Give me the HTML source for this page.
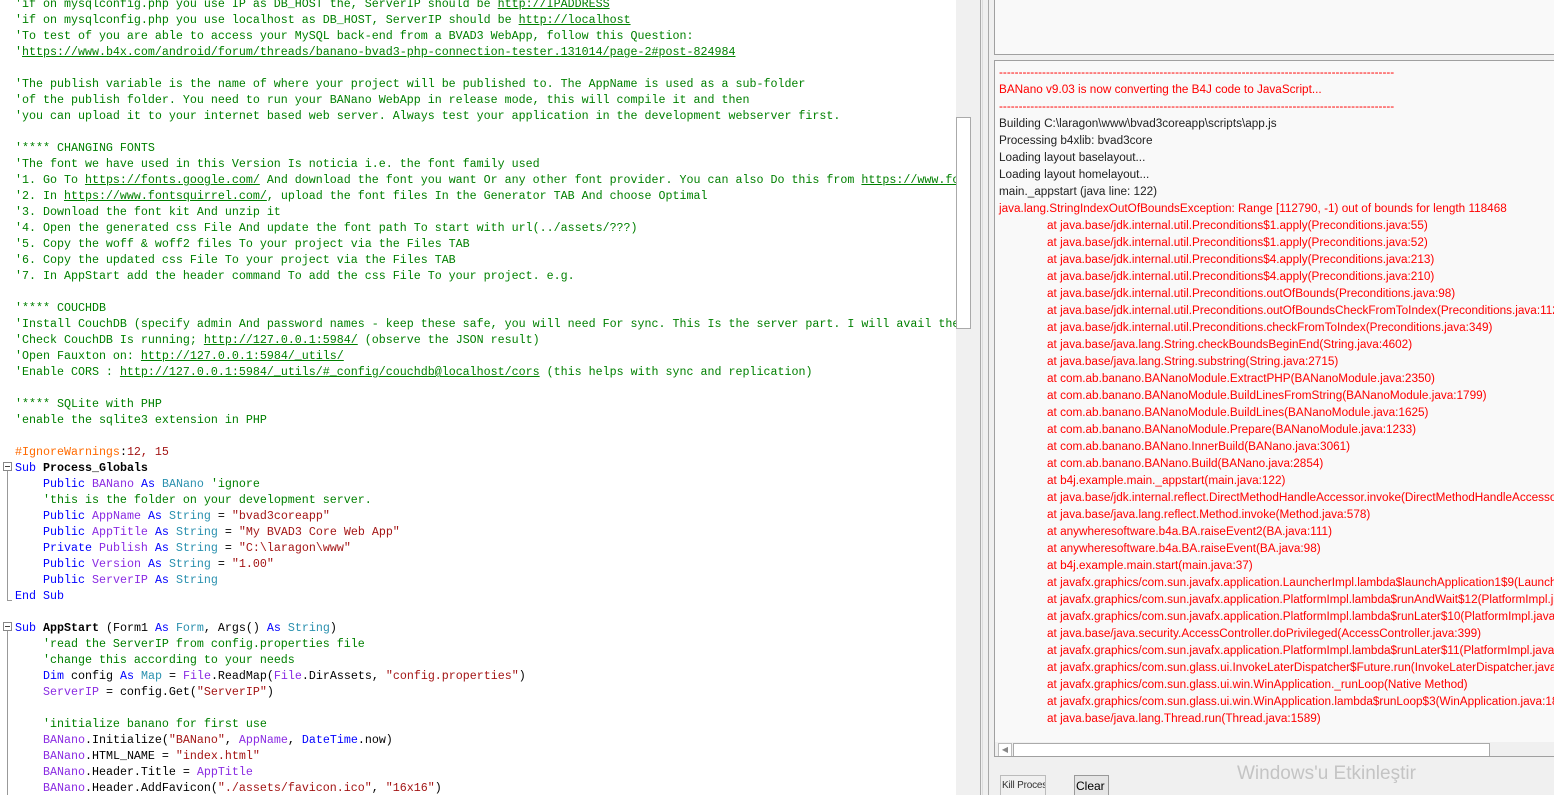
<!DOCTYPE html>
<html><head><meta charset="utf-8"><style>
*{margin:0;padding:0;box-sizing:border-box}
html,body{width:1554px;height:795px;overflow:hidden}
body{background:#f0f0f0;position:relative;font-family:"Liberation Sans",sans-serif}
#ed{position:absolute;left:0;top:0;width:956px;height:795px;background:#fff;overflow:hidden}
#code{position:absolute;left:15px;top:-4px;font-family:"Liberation Mono",monospace;font-size:11.67px;line-height:16px;white-space:pre;color:#000}
.c{color:#008000}.c u{text-decoration:underline}
.k{color:#0000ff}.t{color:#2b91af}.v{color:#8a2be2}.s{color:#a31515}.d{color:#ff6a00}.b{font-weight:bold}
.fold{position:absolute;left:3px;width:9px;height:9px;border:1px solid #888;background:#fff}
.fold:after{content:"";position:absolute;left:1px;top:3px;width:5px;height:1px;background:#444}
.fl{position:absolute;left:7px;width:1px;background:#999}
#vs{position:absolute;left:956px;top:0;width:16px;height:795px;background:#f0f0f0}
#th{position:absolute;left:956px;top:117px;width:15px;height:212px;background:#fff;border:1px solid #aaa}
.vl{position:absolute;top:0;height:795px;width:1px;background:#aaa}
#top{position:absolute;left:994px;top:-2px;width:570px;height:57px;background:#f9f9f9;border:1px solid #a0a0a0}
#log{position:absolute;left:994px;top:60px;width:570px;height:697px;background:#f9f9f9;border:1px solid #a0a0a0;overflow:hidden}
#lt{position:absolute;left:4px;top:3px;font-size:11.75px;line-height:17px;white-space:pre;color:#ff0000}
#lt .n{color:#222}
#lt .i{padding-left:48px}
#hs{position:absolute;left:0;top:681px;width:570px;height:15px;background:#f0f0f0}
#hl{position:absolute;left:3px;top:1px;width:14px;height:14px;border:1px solid #bbb;background:#fff;font-size:8px;color:#888;text-align:center;line-height:12px}
#ht{position:absolute;left:18px;top:1px;width:477px;height:14px;border:1px solid #aaa;background:#fff}
.btn{position:absolute;top:775px;height:22px;border:1px solid #bbb;background:#f0f0f0;font-size:12px;line-height:20px;padding:0 1px;color:#333;white-space:nowrap;overflow:hidden}
#wm{position:absolute;left:1237px;top:763px;font-size:19px;color:#c4c4c4;white-space:nowrap}
</style></head><body>
<div id="ed">
<div id="code"><span class="c">'if on mysqlconfig.php you use IP as DB_HOST the, ServerIP should be <u>http://IPADDRESS</u></span>
<span class="c">'if on mysqlconfig.php you use localhost as DB_HOST, ServerIP should be <u>http://localhost</u></span>
<span class="c">'To test of you are able to access your MySQL back-end from a BVAD3 WebApp, follow this Question:</span>
<span class="c">'<u>https://www.b4x.com/android/forum/threads/banano-bvad3-php-connection-tester.131014/page-2#post-824984</u></span>

<span class="c">'The publish variable is the name of where your project will be published to. The AppName is used as a sub-folder</span>
<span class="c">'of the publish folder. You need to run your BANano WebApp in release mode, this will compile it and then</span>
<span class="c">'you can upload it to your internet based web server. Always test your application in the development webserver first.</span>

<span class="c">'**** CHANGING FONTS</span>
<span class="c">'The font we have used in this Version Is noticia i.e. the font family used</span>
<span class="c">'1. Go To <u>https://fonts.google.com/</u> And download the font you want Or any other font provider. You can also Do this from <u>https://www.fontsquirrel.com/</u></span>
<span class="c">'2. In <u>https://www.fontsquirrel.com/</u>, upload the font files In the Generator TAB And choose Optimal</span>
<span class="c">'3. Download the font kit And unzip it</span>
<span class="c">'4. Open the generated css File And update the font path To start with url(../assets/???)</span>
<span class="c">'5. Copy the woff &amp; woff2 files To your project via the Files TAB</span>
<span class="c">'6. Copy the updated css File To your project via the Files TAB</span>
<span class="c">'7. In AppStart add the header command To add the css File To your project. e.g.</span>

<span class="c">'**** COUCHDB</span>
<span class="c">'Install CouchDB (specify admin And password names - keep these safe, you will need For sync. This Is the server part. I will avail the client part</span>
<span class="c">'Check CouchDB Is running; <u>http://127.0.0.1:5984/</u> (observe the JSON result)</span>
<span class="c">'Open Fauxton on: <u>http://127.0.0.1:5984/_utils/</u></span>
<span class="c">'Enable CORS : <u>http://127.0.0.1:5984/_utils/#_config/couchdb@localhost/cors</u> (this helps with sync and replication)</span>

<span class="c">'**** SQLite with PHP</span>
<span class="c">'enable the sqlite3 extension in PHP</span>

<span class="d">#IgnoreWarnings</span>:<span class="s">12, 15</span>
<span class="k">Sub</span> <span class="b">Process_Globals</span>
    <span class="k">Public</span> <span class="v">BANano</span> <span class="k">As</span> <span class="t">BANano</span> <span class="c">'ignore</span>
    <span class="c">'this is the folder on your development server.</span>
    <span class="k">Public</span> <span class="v">AppName</span> <span class="k">As</span> <span class="t">String</span> = <span class="s">"bvad3coreapp"</span>
    <span class="k">Public</span> <span class="v">AppTitle</span> <span class="k">As</span> <span class="t">String</span> = <span class="s">"My BVAD3 Core Web App"</span>
    <span class="k">Private</span> <span class="v">Publish</span> <span class="k">As</span> <span class="t">String</span> = <span class="s">"C:\laragon\www"</span>
    <span class="k">Public</span> <span class="v">Version</span> <span class="k">As</span> <span class="t">String</span> = <span class="s">"1.00"</span>
    <span class="k">Public</span> <span class="v">ServerIP</span> <span class="k">As</span> <span class="t">String</span>
<span class="k">End Sub</span>

<span class="k">Sub</span> <span class="b">AppStart</span> (Form1 <span class="k">As</span> <span class="t">Form</span>, Args() <span class="k">As</span> <span class="t">String</span>)
    <span class="c">'read the ServerIP from config.properties file</span>
    <span class="c">'change this according to your needs</span>
    <span class="k">Dim</span> config <span class="k">As</span> <span class="t">Map</span> = <span class="v">File</span>.ReadMap(<span class="v">File</span>.DirAssets, <span class="s">"config.properties"</span>)
    <span class="v">ServerIP</span> = config.Get(<span class="s">"ServerIP"</span>)

    <span class="c">'initialize banano for first use</span>
    <span class="v">BANano</span>.Initialize(<span class="s">"BANano"</span>, <span class="v">AppName</span>, <span class="k">DateTime</span>.now)
    <span class="v">BANano</span>.HTML_NAME = <span class="s">"index.html"</span>
    <span class="v">BANano</span>.Header.Title = <span class="v">AppTitle</span>
    <span class="v">BANano</span>.Header.AddFavicon(<span class="s">"./assets/favicon.ico"</span>, <span class="s">"16x16"</span>)</div>
<div class="fold" style="top:462px"></div><div class="fl" style="top:471px;height:130px"></div><div class="fl" style="top:600px;width:5px;height:1px"></div>
<div class="fold" style="top:622px"></div><div class="fl" style="top:631px;height:170px"></div>
</div>
<div id="vs"></div><div id="th"></div>
<div class="vl" style="left:980px"></div><div class="vl" style="left:982px;background:#ddd"></div><div class="vl" style="left:988px"></div>
<div id="top"></div>
<div id="log"><div id="lt">-----------------------------------------------------------------------------------------------------
BANano v9.03 is now converting the B4J code to JavaScript...
-----------------------------------------------------------------------------------------------------
<span class="n">Building C:\laragon\www\bvad3coreapp\scripts\app.js
Processing b4xlib: bvad3core
Loading layout baselayout...
Loading layout homelayout...
main._appstart (java line: 122)</span>
java.lang.StringIndexOutOfBoundsException: Range [112790, -1) out of bounds for length 118468
<span class="i">at java.base/jdk.internal.util.Preconditions$1.apply(Preconditions.java:55)</span>
<span class="i">at java.base/jdk.internal.util.Preconditions$1.apply(Preconditions.java:52)</span>
<span class="i">at java.base/jdk.internal.util.Preconditions$4.apply(Preconditions.java:213)</span>
<span class="i">at java.base/jdk.internal.util.Preconditions$4.apply(Preconditions.java:210)</span>
<span class="i">at java.base/jdk.internal.util.Preconditions.outOfBounds(Preconditions.java:98)</span>
<span class="i">at java.base/jdk.internal.util.Preconditions.outOfBoundsCheckFromToIndex(Preconditions.java:112)</span>
<span class="i">at java.base/jdk.internal.util.Preconditions.checkFromToIndex(Preconditions.java:349)</span>
<span class="i">at java.base/java.lang.String.checkBoundsBeginEnd(String.java:4602)</span>
<span class="i">at java.base/java.lang.String.substring(String.java:2715)</span>
<span class="i">at com.ab.banano.BANanoModule.ExtractPHP(BANanoModule.java:2350)</span>
<span class="i">at com.ab.banano.BANanoModule.BuildLinesFromString(BANanoModule.java:1799)</span>
<span class="i">at com.ab.banano.BANanoModule.BuildLines(BANanoModule.java:1625)</span>
<span class="i">at com.ab.banano.BANanoModule.Prepare(BANanoModule.java:1233)</span>
<span class="i">at com.ab.banano.BANano.InnerBuild(BANano.java:3061)</span>
<span class="i">at com.ab.banano.BANano.Build(BANano.java:2854)</span>
<span class="i">at b4j.example.main._appstart(main.java:122)</span>
<span class="i">at java.base/jdk.internal.reflect.DirectMethodHandleAccessor.invoke(DirectMethodHandleAccessor.java:103)</span>
<span class="i">at java.base/java.lang.reflect.Method.invoke(Method.java:578)</span>
<span class="i">at anywheresoftware.b4a.BA.raiseEvent2(BA.java:111)</span>
<span class="i">at anywheresoftware.b4a.BA.raiseEvent(BA.java:98)</span>
<span class="i">at b4j.example.main.start(main.java:37)</span>
<span class="i">at javafx.graphics/com.sun.javafx.application.LauncherImpl.lambda$launchApplication1$9(LauncherImpl.java:847)</span>
<span class="i">at javafx.graphics/com.sun.javafx.application.PlatformImpl.lambda$runAndWait$12(PlatformImpl.java:484)</span>
<span class="i">at javafx.graphics/com.sun.javafx.application.PlatformImpl.lambda$runLater$10(PlatformImpl.java:457)</span>
<span class="i">at java.base/java.security.AccessController.doPrivileged(AccessController.java:399)</span>
<span class="i">at javafx.graphics/com.sun.javafx.application.PlatformImpl.lambda$runLater$11(PlatformImpl.java:456)</span>
<span class="i">at javafx.graphics/com.sun.glass.ui.InvokeLaterDispatcher$Future.run(InvokeLaterDispatcher.java:96)</span>
<span class="i">at javafx.graphics/com.sun.glass.ui.win.WinApplication._runLoop(Native Method)</span>
<span class="i">at javafx.graphics/com.sun.glass.ui.win.WinApplication.lambda$runLoop$3(WinApplication.java:184)</span>
<span class="i">at java.base/java.lang.Thread.run(Thread.java:1589)</span></div>
<div id="hs"><div id="hl">◀</div><div id="ht"></div></div>
</div>
<div class="btn" style="left:1000px;width:46px;font-size:10px;letter-spacing:-0.2px">Kill Process</div>
<div class="btn" style="left:1074px;width:35px;border-color:#999;background:#e5e5e5;color:#000">Clear</div>
<div id="wm">Windows'u Etkinleştir</div>
</body></html>
